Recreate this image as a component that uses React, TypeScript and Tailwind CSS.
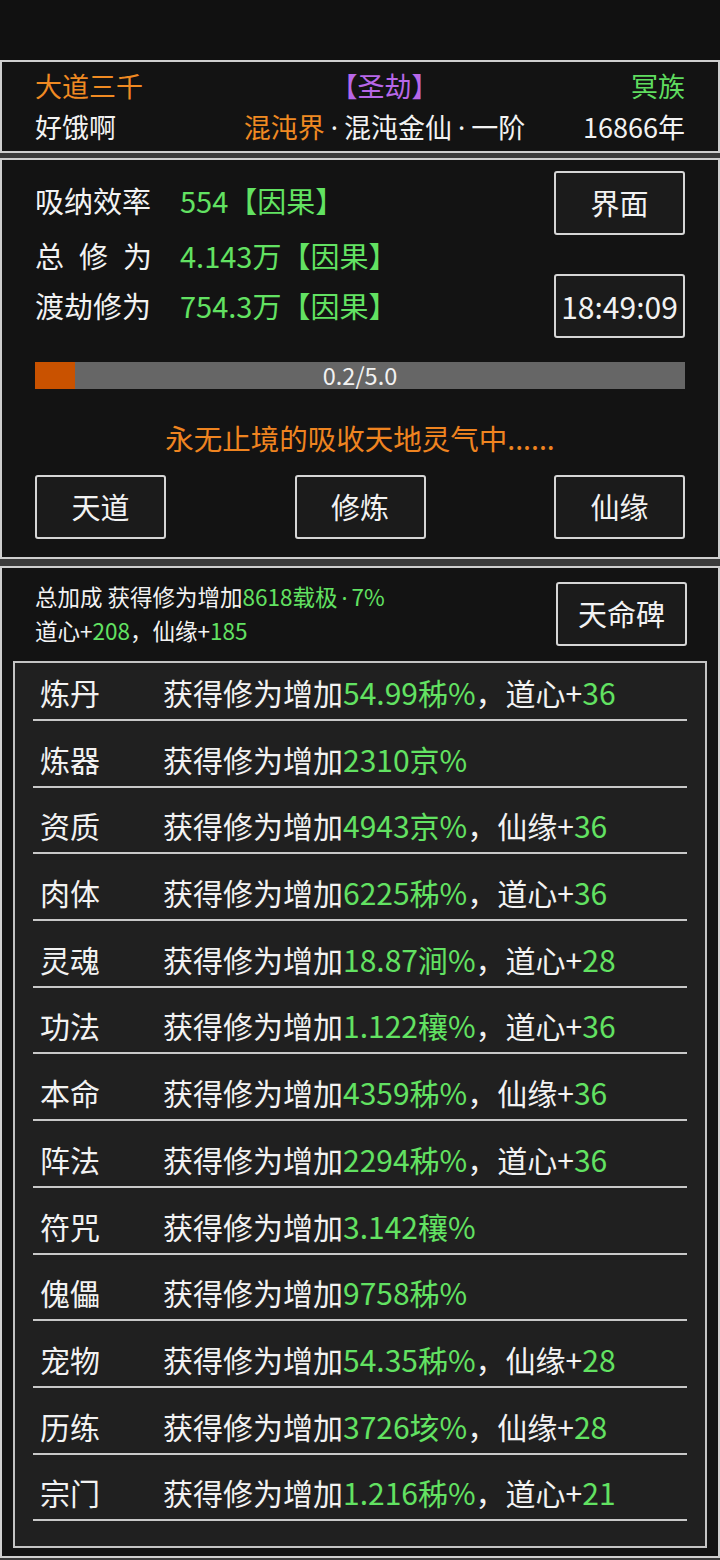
const G = "text-[#62e262]";

const rows: { name: string; value: string; extra?: [string, string] }[] = [
  { name: "炼丹", value: "54.99秭%", extra: ["道心+", "36"] },
  { name: "炼器", value: "2310京%" },
  { name: "资质", value: "4943京%", extra: ["仙缘+", "36"] },
  { name: "肉体", value: "6225秭%", extra: ["道心+", "36"] },
  { name: "灵魂", value: "18.87涧%", extra: ["道心+", "28"] },
  { name: "功法", value: "1.122穰%", extra: ["道心+", "36"] },
  { name: "本命", value: "4359秭%", extra: ["仙缘+", "36"] },
  { name: "阵法", value: "2294秭%", extra: ["道心+", "36"] },
  { name: "符咒", value: "3.142穰%" },
  { name: "傀儡", value: "9758秭%" },
  { name: "宠物", value: "54.35秭%", extra: ["仙缘+", "28"] },
  { name: "历练", value: "3726垓%", extra: ["仙缘+", "28"] },
  { name: "宗门", value: "1.216秭%", extra: ["道心+", "21"] },
];

// narrow latin middle dot instead of the full-width CJK one
const Dot = ({ className = "" }: { className?: string }) => (
  <span className={`font-['Noto_Sans'] ${className}`}>·</span>
);

const Btn = ({ children, className = "" }: { children: React.ReactNode; className?: string }) => (
  <div
    className={`w-[131px] h-[64px] flex items-center justify-center border-2 border-[#d6d6d6] rounded-[3px] bg-[#1b1b1b] text-[29px] text-[#f2f2f2] ${className}`}
  >
    {children}
  </div>
);

const Stat = ({ label, value }: { label: React.ReactNode; value: string }) => (
  <div className="flex items-center h-[50px]">
    <div className="w-[145px] text-[#f2f2f2]">{label}</div>
    <div className={G}>
      {value}【因果】
    </div>
  </div>
);

export default function App() {
  return (
    <div
      className="w-[720px] min-h-[1560px] bg-[#3b3b3b] flex flex-col"
      style={{ fontFamily: '"Noto Sans CJK SC", "Noto Sans", sans-serif' }}
    >
      <div className="h-[60px] bg-[#111111]" />

      {/* header */}
      <div className="h-[93px] border-2 border-[#cfcfcf] bg-[#131313] px-[33px] flex flex-col justify-center text-[27px] leading-[41px]">
        <div className="grid grid-cols-[160px_1fr_111px]">
          <div className="text-[#f08a22]">大道三千</div>
          <div className="text-center text-[#b767e8]">【圣劫】</div>
          <div className="text-right text-[#5fdc5f]">冥族</div>
        </div>
        <div className="grid grid-cols-[160px_1fr_111px] text-[#f2f2f2]">
          <div>好饿啊</div>
          <div className="text-center whitespace-nowrap">
            <span className="text-[#f08a22]">混沌界</span>
            <Dot className="mx-[6px]" />
            混沌金仙
            <Dot className="mx-[6px]" />
            一阶
          </div>
          <div className="text-right whitespace-nowrap">16866年</div>
        </div>
      </div>

      {/* cultivation panel */}
      <div className="mt-[5px] h-[401px] border-2 border-[#cfcfcf] bg-[#131313] px-[33px] pt-[11px]">
        <div className="flex justify-between">
          <div className="pt-[5px] text-[29px]">
            <Stat label="吸纳效率" value="554" />
            <div className="h-[5px]" />
            <Stat
              label={
                <div className="w-[117px] flex justify-between">
                  <span>总</span>
                  <span>修</span>
                  <span>为</span>
                </div>
              }
              value="4.143万"
            />
            <Stat label="渡劫修为" value="754.3万" />
          </div>
          <div className="flex flex-col gap-[39px]">
            <Btn>界面</Btn>
            <Btn className="text-[30px]">18:49:09</Btn>
          </div>
        </div>

        <div className="mt-[24px] h-[27px] bg-[#666666] relative flex items-center justify-center">
          <div className="absolute left-0 top-0 h-full w-[40px] bg-[#c95200]" />
          <span className="relative text-[23.5px] text-[#f2f2f2] leading-none">0.2/5.0</span>
        </div>

        <div className="mt-[29px] text-center text-[28.5px] leading-[40px] text-[#ef8420]">
          永无止境的吸收天地灵气中......
        </div>

        <div className="mt-[17px] flex justify-between">
          <Btn>天道</Btn>
          <Btn>修炼</Btn>
          <Btn>仙缘</Btn>
        </div>
      </div>

      {/* bonus panel */}
      <div className="mt-[7px] h-[992px] border-2 border-[#cfcfcf] bg-[#131313] px-[11px] pt-[12px]">
        <div className="flex items-center justify-between pl-[22px] pr-[20px]">
          <div className="text-[22.5px] leading-[33px] text-[#f2f2f2] whitespace-nowrap">
            <div>
              总加成 获得修为增加
              <span className={G}>
                8618载极
                <Dot className="mx-[4px]" />
                7%
              </span>
            </div>
            <div>
              道心+<span className={G}>208</span>，仙缘+<span className={G}>185</span>
            </div>
          </div>
          <Btn>天命碑</Btn>
        </div>

        <div className="mt-[14px] h-[887px] border-2 border-[#c4c4c4] bg-[#202020] px-[18px] pt-[3px] flex flex-col gap-[11.7px]">
          {rows.map((r) => (
            <div
              key={r.name}
              className="h-[55px] shrink-0 border-b-2 border-[#c8c8c8] flex items-center pl-[7px] text-[30px] text-[#f2f2f2] whitespace-nowrap"
            >
              <div className="w-[123px]">{r.name}</div>
              <div>
                获得修为增加<span className={G}>{r.value}</span>
                {r.extra && (
                  <>
                    ，{r.extra[0]}
                    <span className={G}>{r.extra[1]}</span>
                  </>
                )}
              </div>
            </div>
          ))}
        </div>
      </div>
    </div>
  );
}
